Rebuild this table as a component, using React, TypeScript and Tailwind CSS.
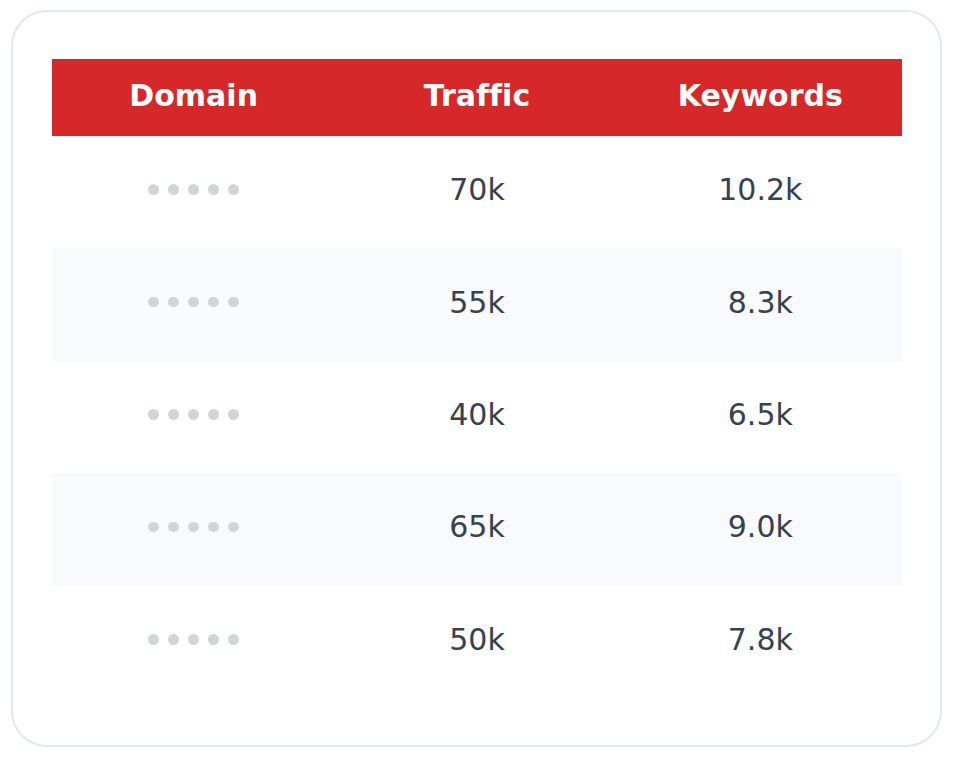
import React from "react";

const rows = [
  { t: "70k", k: "10.2k" },
  { t: "55k", k: "8.3k" },
  { t: "40k", k: "6.5k" },
  { t: "65k", k: "9.0k" },
  { t: "50k", k: "7.8k" },
];

function Dots() {
  return (
    <div className="flex items-center gap-[9.5px]">
      {[0, 1, 2, 3, 4].map((i) => (
        <span key={i} className="block w-[10.5px] h-[10.5px] rounded-full bg-[#d1d5db]" />
      ))}
    </div>
  );
}

export default function App() {
  return (
    <div
      className="w-[953px] h-[759px] bg-white pt-[10px] pl-[11px] [font-variant-ligatures:none]"
      style={{ fontFamily: '"DejaVu Sans", sans-serif' }}
    >
      <div className="w-[931px] h-[737px] border-2 border-[#e2e8f0] rounded-[36px] bg-white pt-[47px] pl-[39px]">
        <div className="w-[850px]">
          <div className="grid grid-cols-3 h-[77px] pb-[4px] bg-[#d62828] text-white font-bold text-[30px]">
            <div className="flex items-center justify-center">Domain</div>
            <div className="flex items-center justify-center">Traffic</div>
            <div className="flex items-center justify-center">Keywords</div>
          </div>
          {rows.map((r, i) => (
            <div
              key={i}
              className={`grid grid-cols-3 h-[112.4px] pb-[5px] text-[30px] text-[#374151] ${i % 2 === 1 ? "bg-[#f8fafc]" : "bg-white"}`}
            >
              <div className="flex items-center justify-center">
                <Dots />
              </div>
              <div className="flex items-center justify-center">{r.t}</div>
              <div className="flex items-center justify-center">{r.k}</div>
            </div>
          ))}
        </div>
      </div>
    </div>
  );
}
